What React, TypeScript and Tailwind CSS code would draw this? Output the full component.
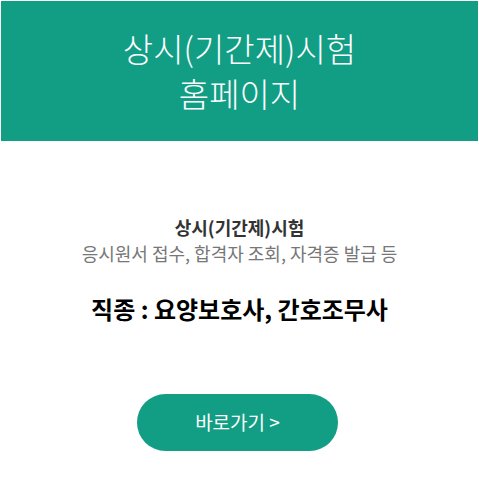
const App = () => {
  return (
    <div className="min-h-[487px] w-[479px] bg-white p-px font-['Noto_Sans_CJK_KR',sans-serif]">
      {/* Header */}
      <div className="flex h-[140px] flex-col items-center justify-center bg-[#129e84] text-center text-[33px] font-light leading-[45px] text-white">
        <p>상시(기간제)시험</p>
        <p>홈페이지</p>
      </div>

      {/* Content */}
      <div className="flex flex-col items-center pt-[73px] text-center">
        <p className="text-[18px] font-bold leading-[26px] text-[#333]">상시(기간제)시험</p>
        <p className="text-[18px] leading-[26px] text-[#777]">응시원서 접수, 합격자 조회, 자격증 발급 등</p>
        <p className="mt-[27px] text-[24px] font-bold leading-[32px] text-black">직종 : 요양보호사, 간호조무사</p>

        <button className="mr-[4px] mt-[69px] flex h-[57px] w-[201px] items-center justify-center rounded-full bg-[#129e84] text-[19px] text-white">
          바로가기 &gt;
        </button>
      </div>
    </div>
  );
};

export default App;
